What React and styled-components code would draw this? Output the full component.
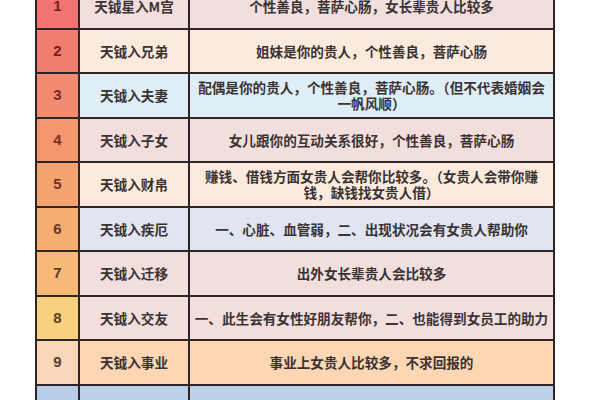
import React from "react";
import styled, { createGlobalStyle } from "styled-components";

const GlobalStyle = createGlobalStyle`
  html, body {
    margin: 0;
    padding: 0;
    background: #ffffff;
    overflow: hidden;
  }
  body {
    font-family: "Noto Sans CJK SC", "Liberation Sans", sans-serif;
  }
`;

const Page = styled.div`
  width: 600px;
  height: 400px;
  overflow: hidden;
  background: #fff;
`;

const Table = styled.table`
  margin: -17px 0 0 35px;
  width: 520px;
  border-collapse: collapse;
  table-layout: fixed;
  border: 2px solid #2e2626;
`;

const Row = styled.tr`
  height: 44.5px;
  background: ${(p) => p.$bg};
`;

const Cell = styled.td`
  border: 2px solid #2e2626;
  padding: 0 1px;
  text-align: center;
  vertical-align: middle;
  color: #3a3333;
  font-size: 13.6px;
  line-height: 16px;
  font-weight: 700;
`;

const NumCell = styled(Cell)`
  width: 39px;
  background: ${(p) => p.$bg};
  color: ${(p) => p.$ink};
  font-family: "Liberation Sans", "DejaVu Sans", sans-serif;
  font-size: 15px;
`;

const NameCell = styled(Cell)`
  width: 106px;
`;

const DescCell = styled(Cell)`
  white-space: nowrap;
`;

const rows = [
  {
    n: 1,
    name: "天钺星入M宫",
    desc: ["个性善良，菩萨心肠，女长辈贵人比较多"],
    bg: "#f3dede",
    num: "#ef7472",
    ink: "#7a1f1f",
  },
  {
    n: 2,
    name: "天钺入兄弟",
    desc: ["姐妹是你的贵人，个性善良，菩萨心肠"],
    bg: "#fcebdd",
    num: "#f07e70",
    ink: "#7a1f1f",
  },
  {
    n: 3,
    name: "天钺入夫妻",
    desc: ["配偶是你的贵人，个性善良，菩萨心肠。（但不代表婚姻会", "一帆风顺）"],
    bg: "#dfedf6",
    num: "#f28b70",
    ink: "#7a2a1f",
  },
  {
    n: 4,
    name: "天钺入子女",
    desc: ["女儿跟你的互动关系很好，个性善良，菩萨心肠"],
    bg: "#f3dede",
    num: "#f39770",
    ink: "#7a2f1f",
  },
  {
    n: 5,
    name: "天钺入财帛",
    desc: ["赚钱、借钱方面女贵人会帮你比较多。（女贵人会带你赚", "钱，缺钱找女贵人借）"],
    bg: "#fcebdd",
    num: "#f5a470",
    ink: "#6e3320",
  },
  {
    n: 6,
    name: "天钺入疾厄",
    desc: ["一、心脏、血管弱，二、出现状况会有女贵人帮助你"],
    bg: "#e0e5f1",
    num: "#f6ad72",
    ink: "#6b3a22",
  },
  {
    n: 7,
    name: "天钺入迁移",
    desc: ["出外女长辈贵人会比较多"],
    bg: "#f3dede",
    num: "#f8b877",
    ink: "#5e3a22",
  },
  {
    n: 8,
    name: "天钺入交友",
    desc: ["一、此生会有女性好朋友帮你，二、也能得到女员工的助力"],
    bg: "#f3dede",
    num: "#f9d07e",
    ink: "#5a4025",
  },
  {
    n: 9,
    name: "天钺入事业",
    desc: ["事业上女贵人比较多，不求回报的"],
    bg: "#fdd6b4",
    num: "#fad6b8",
    ink: "#5a4030",
  },
  {
    n: 10,
    name: "天钺入田宅",
    desc: ["一、能得到祖业，二、继承家里女性长辈的房产"],
    bg: "#bcd0e8",
    num: "#b8cde8",
    ink: "#3a3a4a",
  },
];

export default function App() {
  return (
    <Page>
      <GlobalStyle />
      <Table>
        <tbody>
          {rows.map((r) => (
            <Row key={r.n} $bg={r.bg}>
              <NumCell $bg={r.num} $ink={r.ink}>
                {r.n}
              </NumCell>
              <NameCell>{r.name}</NameCell>
              <DescCell>
                {r.desc.map((line, i) => (
                  <React.Fragment key={i}>
                    {i > 0 && <br />}
                    {line}
                  </React.Fragment>
                ))}
              </DescCell>
            </Row>
          ))}
        </tbody>
      </Table>
    </Page>
  );
}
